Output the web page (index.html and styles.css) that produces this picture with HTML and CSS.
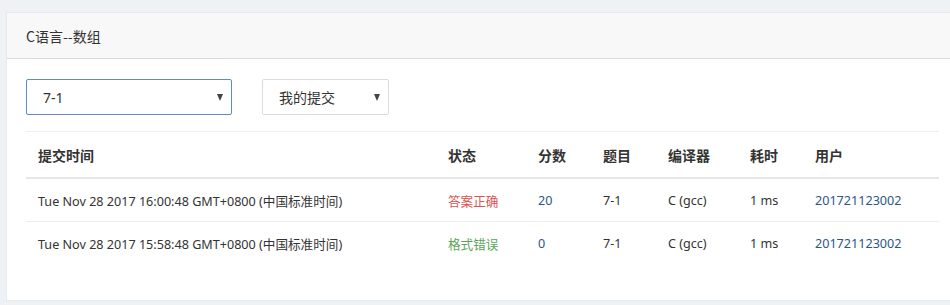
FILE: index.html
```html
<!DOCTYPE html>
<html lang="zh-CN">
<head>
<meta charset="utf-8">
<title>C语言--数组</title>
<link rel="stylesheet" href="styles.css">
</head>
<body>
<div class="page">
  <div class="panel">
    <div class="panel-heading">C语言--数组</div>
    <div class="panel-body">
      <div class="filters">
        <div class="select select-problem focused"><span>7-1</span><i class="caret"></i></div>
        <div class="select select-mine"><span>我的提交</span><i class="caret"></i></div>
      </div>
      <table class="table">
        <thead>
          <tr>
            <th class="c-time">提交时间</th>
            <th class="c-status">状态</th>
            <th class="c-score">分数</th>
            <th class="c-prob">题目</th>
            <th class="c-comp">编译器</th>
            <th class="c-cost">耗时</th>
            <th class="c-user">用户</th>
          </tr>
        </thead>
        <tbody>
          <tr>
            <td>Tue Nov 28 2017 16:00:48 GMT+0800 (中国标准时间)</td>
            <td class="ok">答案正确</td>
            <td class="link">20</td>
            <td>7-1</td>
            <td>C (gcc)</td>
            <td>1 ms</td>
            <td class="link">201721123002</td>
          </tr>
          <tr>
            <td>Tue Nov 28 2017 15:58:48 GMT+0800 (中国标准时间)</td>
            <td class="pe">格式错误</td>
            <td class="link">0</td>
            <td>7-1</td>
            <td>C (gcc)</td>
            <td>1 ms</td>
            <td class="link">201721123002</td>
          </tr>
        </tbody>
      </table>
    </div>
  </div>
</div>
</body>
</html>
```

FILE: styles.css
```css
html, body {
  margin: 0;
  padding: 0;
}
body {
  background: #eef2f5;
  font-family: "Noto Sans", "Noto Sans CJK SC", sans-serif;
  color: #333;
  font-size: 12.6px;
  overflow: hidden;
}
.page {
  padding: 12px 0 0 6px;
  width: 960px;
}
.panel {
  background: #fff;
  border: 1px solid #e6eaee;
  border-right: none;
  width: 953px;
  box-sizing: border-box;
}
.panel-heading {
  background: #f8f8f8;
  border-bottom: 1px solid #d9d9d9;
  height: 46px;
  box-sizing: border-box;
  padding: 0 19px;
  display: flex;
  align-items: center;
  font-size: 14px;
  color: #333;
  font-family: "Noto Sans CJK SC", "Noto Sans", sans-serif;
}
.panel-body {
  padding: 20px 19px 36px;
}
.filters {
  display: flex;
  gap: 30px;
  margin-bottom: 16px;
}
.select {
  height: 36px;
  box-sizing: border-box;
  border: 1px solid #dcdcdc;
  border-radius: 2px;
  display: flex;
  align-items: center;
  justify-content: space-between;
  padding: 0 8px 0 16px;
  font-size: 14px;
  color: #333;
  background: #fff;
  font-family: "Noto Sans", "Noto Sans CJK SC", sans-serif;
}
.select.focused {
  border-color: #5f8cb8;
}
.select-problem { width: 206px; }
.select-mine { width: 127px; }
.caret {
  width: 0;
  height: 0;
  border-left: 3.5px solid transparent;
  border-right: 3.5px solid transparent;
  border-top: 7px solid #444;
  margin-top: 1px;
}
.table {
  width: 913px;
  border-collapse: collapse;
  border-top: 1px solid #eeeeee;
}
.table th {
  text-align: left;
  font-weight: bold;
  font-size: 14px;
  height: 45px;
  padding: 0 12px;
  border-bottom: 2px solid #e6e6e6;
  font-family: "Noto Sans CJK SC", "Noto Sans", sans-serif;
  color: #333;
}
.table td {
  height: 42px;
  padding: 0 12px;
  border-bottom: 1px solid #eeeeee;
  color: #333;
  white-space: nowrap;
}
.table tbody tr:last-child td {
  border-bottom: none;
}
.c-time { width: 386px; }
.c-status { width: 66px; }
.c-score { width: 41px; }
.c-prob { width: 41px; }
.c-comp { width: 58px; }
.c-cost { width: 41px; }
.table td.ok { color: #d9534f; }
.table td.pe { color: #5aa55a; }
.table td.link { color: #2d5685; }
```
